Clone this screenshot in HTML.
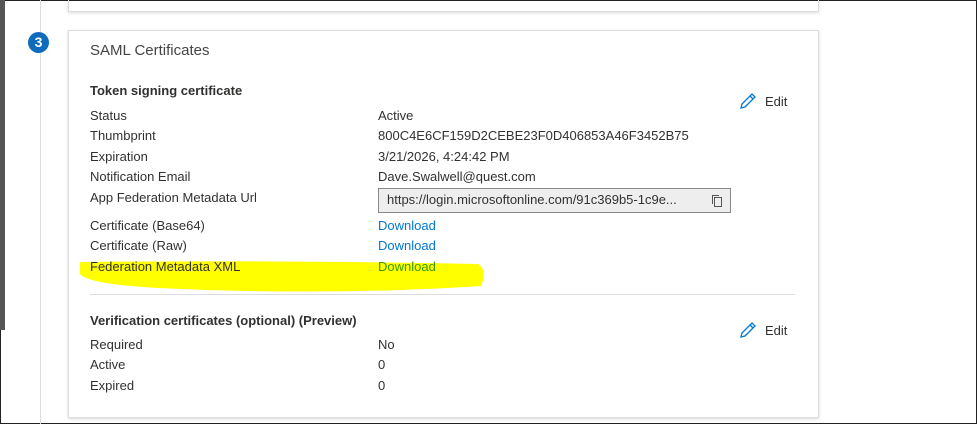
<!DOCTYPE html>
<html><head><style>
body{margin:0;width:977px;height:424px;overflow:hidden;background:#fff;font-family:"Liberation Sans",sans-serif;position:relative}
.frame{position:absolute;left:0;top:0;width:975px;height:422px;border:1px solid #222}
.t{position:absolute;font-size:13px;color:#323130;white-space:nowrap;line-height:16px}
.b{font-weight:bold}
.v{left:378px}
.l{left:90px}
.dl{color:#0078d4}
</style></head><body>
<div class="frame"></div>
<div style="position:absolute;left:0;top:0;width:5px;height:330px;background:#555"></div>
<div style="position:absolute;left:40px;top:0;width:1px;height:424px;background:#ddd"></div>
<div style="position:absolute;left:68px;top:-2px;width:749px;height:13px;border:1px solid #ddd;border-top:none;box-shadow:0 1px 3px rgba(0,0,0,.15)"></div>
<div style="position:absolute;left:28px;top:32px;width:21px;height:21px;border-radius:50%;background:#0f6cbd;color:#fff;font-weight:bold;font-size:14px;text-align:center;line-height:21px">3</div>
<div style="position:absolute;left:68px;top:30px;width:749px;height:386px;border:1px solid #ddd;box-shadow:0 1px 3px rgba(0,0,0,.15)"></div>
<div class="t" style="left:90px;top:43px;font-size:15px;color:#444">SAML Certificates</div>
<div class="t b l" style="top:83px">Token signing certificate</div>
<div class="t l" style="top:108px">Status</div><div class="t v" style="top:108px">Active</div>
<div class="t l" style="top:128px">Thumbprint</div><div class="t v" style="top:128px">800C4E6CF159D2CEBE23F0D406853A46F3452B75</div>
<div class="t l" style="top:149px">Expiration</div><div class="t v" style="top:149px">3/21/2026, 4:24:42 PM</div>
<div class="t l" style="top:169px">Notification Email</div><div class="t v" style="top:169px">Dave.Swalwell@quest.com</div>
<div class="t l" style="top:190px">App Federation Metadata Url</div>
<div style="position:absolute;left:378px;top:188px;width:351px;height:23px;border:1px solid #8a8886;background:#eee"></div>
<div class="t" style="left:387px;top:192px">https://login.microsoftonline.com/91c369b5-1c9e...</div>
<svg style="position:absolute;left:711px;top:194px" width="12" height="13" viewBox="0 0 12 13"><rect x="3.5" y="3.5" width="7" height="9" fill="none" stroke="#555"/><path d="M1.5 10V1.5H8" fill="none" stroke="#555"/></svg>
<svg style="position:absolute;left:78px;top:256px" width="410" height="40"><path d="M2 6 Q200 4 400 8 Q410 14 403 30 Q250 40 80 32 Q10 28 2 18Z" fill="#ffff00"/></svg>
<div class="t l" style="top:218px">Certificate (Base64)</div><div class="t v dl" style="top:218px">Download</div>
<div class="t l" style="top:238px">Certificate (Raw)</div><div class="t v dl" style="top:238px">Download</div>
<div class="t l" style="top:259px">Federation Metadata XML</div><div class="t v" style="top:259px;color:#3a9a00">Download</div>
<div style="position:absolute;left:90px;top:294px;width:705px;height:1px;background:#ddd"></div>
<div class="t b l" style="top:313px">Verification certificates (optional) (Preview)</div>
<div class="t l" style="top:337px">Required</div><div class="t v" style="top:337px">No</div>
<div class="t l" style="top:357px">Active</div><div class="t v" style="top:357px">0</div>
<div class="t l" style="top:378px">Expired</div><div class="t v" style="top:378px">0</div>
<svg style="position:absolute;left:739px;top:92px" width="18" height="18" viewBox="0 0 18 18"><path d="M2 16l1-4L13 2l3 3L6 15z M11 4l3 3" fill="none" stroke="#0078d4" stroke-width="1.3"/></svg>
<div class="t" style="left:765px;top:94px">Edit</div>
<svg style="position:absolute;left:739px;top:321px" width="18" height="18" viewBox="0 0 18 18"><path d="M2 16l1-4L13 2l3 3L6 15z M11 4l3 3" fill="none" stroke="#0078d4" stroke-width="1.3"/></svg>
<div class="t" style="left:765px;top:323px">Edit</div>
</body></html>
